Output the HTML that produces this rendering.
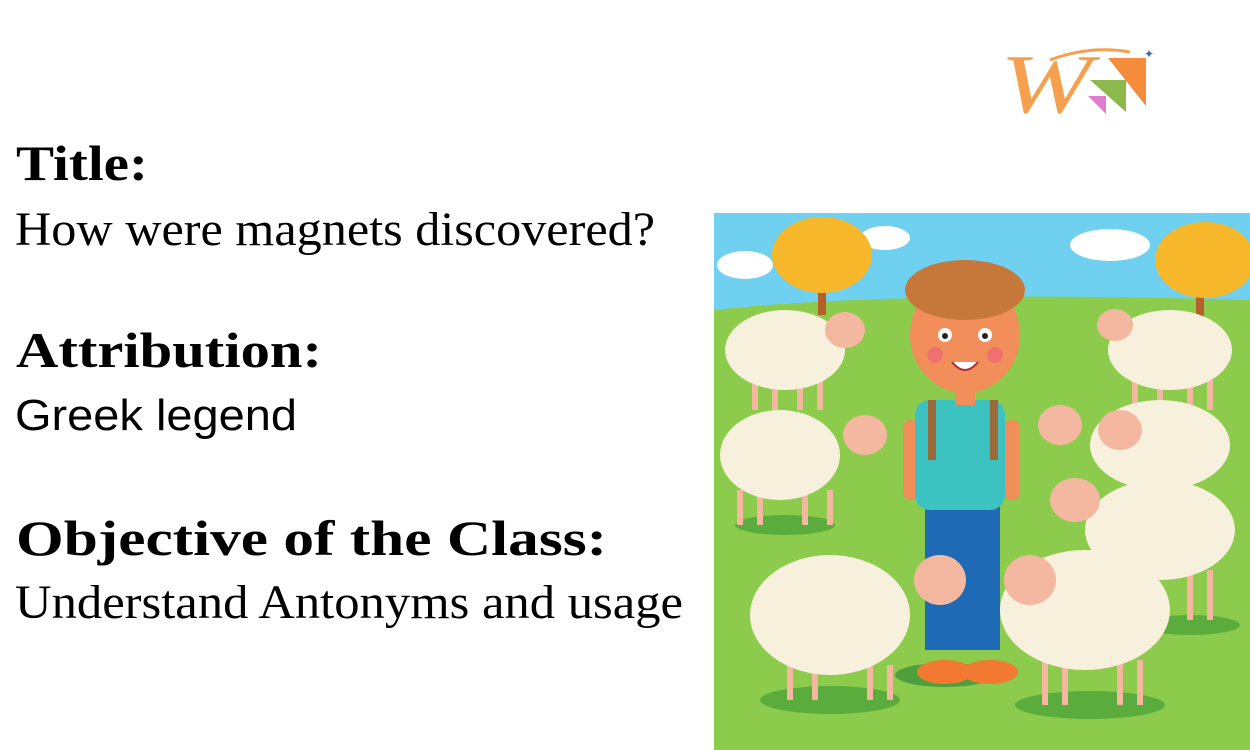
<!DOCTYPE html>
<html><head><meta charset="utf-8"><style>
html,body{margin:0;padding:0;background:#fff;width:1250px;height:750px;overflow:hidden}
svg{position:absolute;left:0;top:0}
</style></head><body>
<svg width="1250" height="750" viewBox="0 0 1250 750" xmlns="http://www.w3.org/2000/svg">
<g fill="#000">
<text x="16" y="180" font-family="Liberation Serif, serif" font-weight="bold" font-size="50" textLength="132" lengthAdjust="spacingAndGlyphs">Title:</text>
<text x="15" y="245" font-family="Liberation Serif, serif" font-size="48" textLength="640" lengthAdjust="spacingAndGlyphs">How were magnets discovered?</text>
<text x="16" y="367" font-family="Liberation Serif, serif" font-weight="bold" font-size="50" textLength="306" lengthAdjust="spacingAndGlyphs">Attribution:</text>
<text x="15" y="430" font-family="Liberation Sans, sans-serif" font-size="44" textLength="282" lengthAdjust="spacingAndGlyphs">Greek legend</text>
<text x="16" y="555" font-family="Liberation Serif, serif" font-weight="bold" font-size="50" textLength="591" lengthAdjust="spacingAndGlyphs">Objective of the Class:</text>
<text x="15" y="618" font-family="Liberation Serif, serif" font-size="48" textLength="668" lengthAdjust="spacingAndGlyphs">Understand Antonyms and usage</text>
</g>
<!-- logo -->
<text x="1000" y="112" font-family="Liberation Serif, serif" font-style="italic" font-size="84" fill="#f4a04e" textLength="92" lengthAdjust="spacingAndGlyphs">W</text>
<path d="M1050 60 Q1090 45 1130 52" stroke="#f4a04e" stroke-width="3" fill="none"/>
<polygon points="1108,58 1146,58 1146,106" fill="#f48c3c"/>
<polygon points="1090,80 1126,80 1126,112" fill="#8cb84c"/>
<polygon points="1088,96 1106,96 1106,114" fill="#e07ccc"/>
<text x="1144" y="58" font-size="12" fill="#4466aa">✦</text>
<!-- illustration -->
<clipPath id="c"><rect x="714" y="213" width="536" height="537"/></clipPath>
<g clip-path="url(#c)">
<rect x="714" y="213" width="536" height="537" fill="#6fd0f0"/>
<path d="M714 310 Q900 290 1250 300 L1250 750 L714 750Z" fill="#8ccb4c"/>
<ellipse cx="745" cy="265" rx="28" ry="14" fill="#fff"/>
<ellipse cx="885" cy="238" rx="25" ry="12" fill="#fff"/>
<ellipse cx="1110" cy="245" rx="40" ry="16" fill="#fff"/>
<rect x="818" y="270" width="8" height="45" fill="#b5602a"/>
<ellipse cx="822" cy="255" rx="50" ry="38" fill="#f6b82a"/>
<rect x="1196" y="275" width="8" height="45" fill="#b5602a"/>
<ellipse cx="1205" cy="260" rx="50" ry="38" fill="#f6b82a"/>
<g fill="#5aac3c">
<ellipse cx="785" cy="525" rx="50" ry="10"/><ellipse cx="830" cy="700" rx="70" ry="14"/>
<ellipse cx="1090" cy="705" rx="75" ry="14"/><ellipse cx="1190" cy="625" rx="50" ry="10"/>
</g>
<g stroke="#f4b8a0" stroke-width="6">
<path d="M755 380v30M775 380v30M800 380v30M820 380v30"/>
<path d="M740 490v35M760 490v35M805 490v35M830 490v35"/>
<path d="M1135 380v30M1160 380v30M1190 380v30M1210 380v30"/>
<path d="M1190 570v50M1210 570v50"/>
<path d="M790 665v35M815 665v35M870 665v35M890 665v35"/>
<path d="M1045 660v45M1065 660v45M1120 660v45M1140 660v45"/>
</g>
<g fill="#f6f0dc">
<ellipse cx="785" cy="350" rx="60" ry="40"/>
<ellipse cx="1170" cy="350" rx="62" ry="40"/>
<ellipse cx="780" cy="455" rx="60" ry="45"/>
<ellipse cx="1160" cy="445" rx="70" ry="45"/>
<ellipse cx="1160" cy="530" rx="75" ry="50"/>
<ellipse cx="830" cy="615" rx="80" ry="60"/>
<ellipse cx="1085" cy="610" rx="85" ry="60"/>
</g>
<ellipse cx="945" cy="675" rx="50" ry="12" fill="#4ea03c"/>
<rect x="925" y="500" width="75" height="150" fill="#1f6ab4"/>
<rect x="903" y="420" width="16" height="80" rx="8" fill="#f28e5a"/>
<rect x="1004" y="420" width="16" height="80" rx="8" fill="#f28e5a"/>
<rect x="915" y="400" width="90" height="110" rx="15" fill="#3cc2c0"/>
<rect x="928" y="400" width="8" height="60" fill="#9a6a3a"/>
<rect x="990" y="400" width="8" height="60" fill="#9a6a3a"/>
<rect x="955" y="380" width="20" height="25" fill="#f28e5a"/>
<ellipse cx="965" cy="335" rx="55" ry="58" fill="#f28e5a"/>
<ellipse cx="965" cy="290" rx="60" ry="30" fill="#c5783a"/>
<circle cx="935" cy="355" r="8" fill="#f07070"/><circle cx="995" cy="355" r="8" fill="#f07070"/>
<circle cx="945" cy="335" r="7" fill="#fff"/><circle cx="985" cy="335" r="7" fill="#fff"/>
<circle cx="945" cy="336" r="3" fill="#222"/><circle cx="985" cy="336" r="3" fill="#222"/>
<path d="M952 362 Q965 378 978 362" fill="#fff" stroke="#a33" stroke-width="2"/>
<g fill="#f4b8a0">
<ellipse cx="845" cy="330" rx="20" ry="18"/>
<ellipse cx="1115" cy="325" rx="18" ry="16"/>
<ellipse cx="865" cy="435" rx="22" ry="20"/>
<ellipse cx="1060" cy="425" rx="22" ry="20"/>
<ellipse cx="1120" cy="430" rx="22" ry="20"/>
<ellipse cx="1075" cy="500" rx="25" ry="22"/>
<ellipse cx="940" cy="580" rx="26" ry="25"/>
<ellipse cx="1030" cy="580" rx="26" ry="25"/>
</g>
<ellipse cx="945" cy="672" rx="28" ry="12" fill="#f27a30"/>
<ellipse cx="990" cy="672" rx="28" ry="12" fill="#f27a30"/>
</g>
</svg>
</body></html>
